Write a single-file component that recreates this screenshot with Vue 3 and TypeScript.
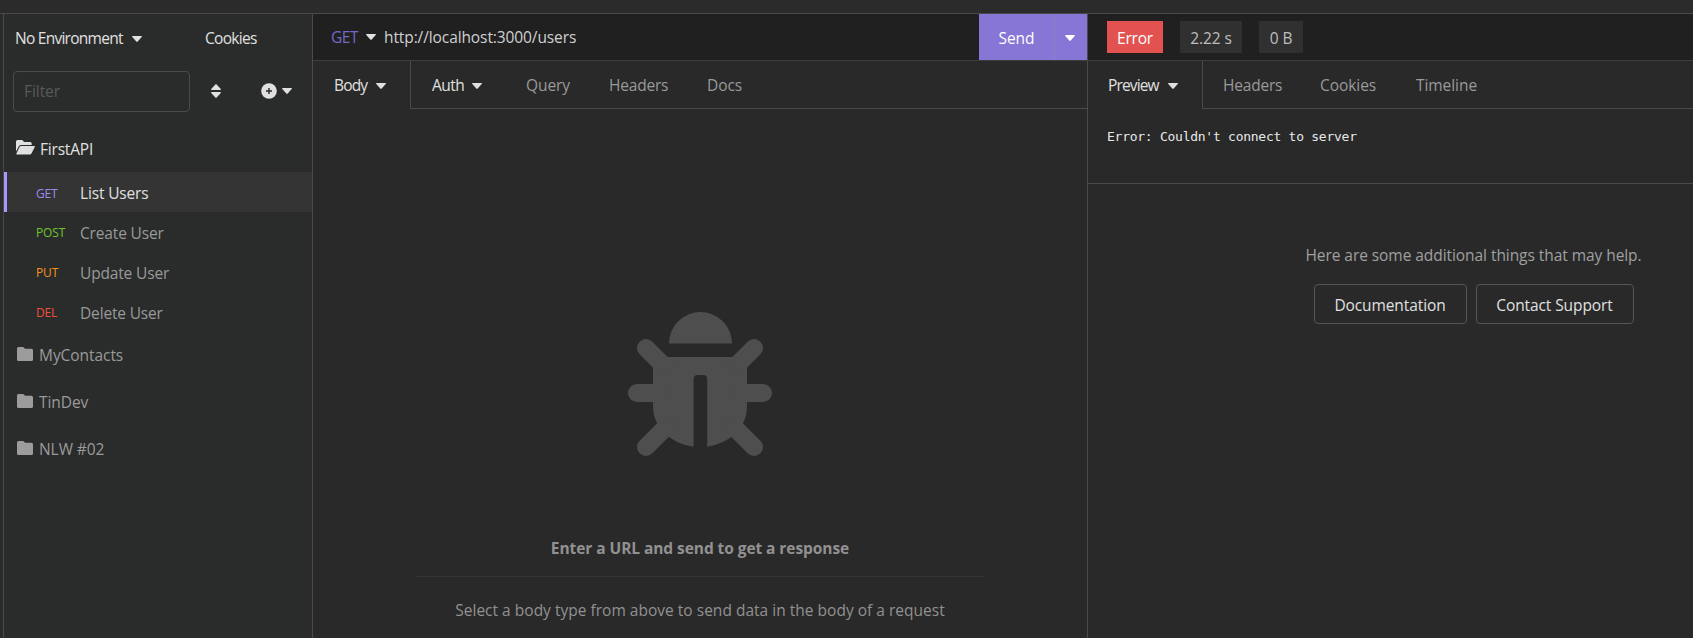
<script setup lang="ts">
interface RequestItem { method: string; name: string; cls: string }

const requests: RequestItem[] = [
  { method: 'GET', name: 'List Users', cls: 'get' },
  { method: 'POST', name: 'Create User', cls: 'post' },
  { method: 'PUT', name: 'Update User', cls: 'put' },
  { method: 'DEL', name: 'Delete User', cls: 'del' },
]
const folders: string[] = ['MyContacts', 'TinDev', 'NLW #02']
</script>

<template>
  <div class="app">
    <div class="topbar"></div>
    <div class="panes">
      <aside class="sidebar">
        <div class="env">
          <span class="t-env">No Environment</span>
          <svg class="caret" viewBox="0 0 10 6"><path d="M.6 0h8.8q.9.3.3 1L5.7 5.5q-.7.8-1.4 0L.3 1Q-.3.3.6 0z" /></svg>
          <span class="t-cookies">Cookies</span>
        </div>
        <div class="filter-row">
          <div class="filter"><span>Filter</span></div>
          <svg class="sort" viewBox="0 0 10 14"><path d="M.7 6Q-.4 5.8.4 4.8L4.4.4Q5 -.2 5.6.4L9.6 4.8Q10.4 5.8 9.3 6zM.7 8h8.6q1.1.2.3 1.2L5.6 13.6q-.6.6-1.2 0L.4 9.2Q-.4 8.2.7 8z" /></svg>
          <svg class="plus" viewBox="0 0 16 16"><circle cx="8" cy="8" r="7.8" /><path d="M8 5v6M5 8h6" /></svg>
          <svg class="caret" viewBox="0 0 10 6"><path d="M.6 0h8.8q.9.3.3 1L5.7 5.5q-.7.8-1.4 0L.3 1Q-.3.3.6 0z" /></svg>
        </div>
        <div class="folder open">
          <svg class="ico-open" viewBox="0 0 19 15"><path d="M0 11.500V1.500Q0 0 1.500 0h4.700l2 2h6Q15.700 2 15.700 3.500V5H5Q3.600 5 2.900 6.200z" /><path d="M5.200 6h13q1 .1.600 1L15.600 13.300Q15 14.500 13.800 14.500H.9q-.9-.1-.5-1L3.400 7.200Q4 6 5.200 6z" /></svg>
          <span class="t-first">FirstAPI</span>
        </div>
        <div v-for="(r, i) in requests" :key="r.name" class="request" :class="{ active: i === 0 }">
          <span class="method" :class="r.cls">{{ r.method }}</span>
          <span class="name">{{ r.name }}</span>
        </div>
        <div class="folders">
          <div v-for="f in folders" :key="f" class="folder">
            <svg class="ico" viewBox="0 0 16 14"><path d="M1.5 0h4.7l2 1.8h6.3Q16 1.8 16 3.3v9.2Q16 14 14.5 14h-13Q0 14 0 12.5v-11Q0 0 1.5 0z" /></svg>
            <span>{{ f }}</span>
          </div>
        </div>
      </aside>

      <section class="request-pane">
        <div class="urlbar">
          <span class="verb">GET</span>
          <svg class="caret" viewBox="0 0 10 6"><path d="M.6 0h8.8q.9.3.3 1L5.7 5.5q-.7.8-1.4 0L.3 1Q-.3.3.6 0z" /></svg>
          <span class="url">http://localhost:3000/users</span>
          <div class="send"><span>Send</span></div>
          <div class="send-more"><svg class="caret" viewBox="0 0 10 6"><path d="M.6 0h8.8q.9.3.3 1L5.7 5.5q-.7.8-1.4 0L.3 1Q-.3.3.6 0z" /></svg></div>
        </div>
        <div class="tabs">
          <div class="tab current body">
            <span class="t-body">Body</span>
            <svg class="caret" viewBox="0 0 10 6"><path d="M.6 0h8.8q.9.3.3 1L5.7 5.5q-.7.8-1.4 0L.3 1Q-.3.3.6 0z" /></svg>
          </div>
          <div class="rest">
            <div class="tab auth">
              <span class="t-auth">Auth</span>
              <svg class="caret" viewBox="0 0 10 6"><path d="M.6 0h8.8q.9.3.3 1L5.7 5.5q-.7.8-1.4 0L.3 1Q-.3.3.6 0z" /></svg>
            </div>
            <span class="tab query">Query</span>
            <span class="tab headers">Headers</span>
            <span class="tab docs">Docs</span>
          </div>
        </div>
        <div class="empty">
          <svg class="bug" viewBox="0 0 144 144">
            <path d="M41 31.5a31.5 31.5 0 0 1 63 0z" />
            <path fill-rule="evenodd" d="M25 45h94v50a47 40 0 0 1-39.8 39.7V67q0-4-4-4h-5.6q-4 0-4 4v67.7A47 40 0 0 1 25 95z" />
            <path class="legs" d="M18 36L36 54M126 36L108 54M9 81h24M135 81h-24M18 135l22-22M126 135l-22-22" />
          </svg>
          <strong>Enter a URL and send to get a response</strong>
          <div class="rule"></div>
          <p>Select a body type from above to send data in the body of a request</p>
        </div>
      </section>

      <section class="response-pane">
        <div class="status">
          <span class="tag error">Error</span>
          <span class="tag time">2.22 s</span>
          <span class="tag size">0 B</span>
        </div>
        <div class="tabs">
          <div class="tab current preview">
            <span class="t-preview">Preview</span>
            <svg class="caret" viewBox="0 0 10 6"><path d="M.6 0h8.8q.9.3.3 1L5.7 5.5q-.7.8-1.4 0L.3 1Q-.3.3.6 0z" /></svg>
          </div>
          <div class="rest">
            <span class="tab r-headers">Headers</span>
            <span class="tab r-cookies">Cookies</span>
            <span class="tab r-timeline">Timeline</span>
          </div>
        </div>
        <pre class="message">Error: Couldn't connect to server</pre>
        <div class="help">
          <p>Here are some additional things that may help.</p>
          <div class="buttons">
            <button class="btn doc">Documentation</button>
            <button class="btn contact">Contact Support</button>
          </div>
        </div>
      </section>
    </div>
  </div>
</template>

<style>
html, body { margin: 0; background: #292929; overflow: hidden; }
</style>

<style scoped>
.app { box-sizing: border-box; width: 1693px; height: 638px; overflow: hidden; display: flex; flex-direction: column; background: #292929; color: #e0e0e0; font: 15.5px/24px "Open Sans", "Noto Sans", sans-serif; letter-spacing: -.06px; white-space: nowrap; }
.app * { box-sizing: border-box; }
.topbar { height: 14px; flex: none; background: #2b2b2b; border-bottom: 1px solid #4a4a4a; }
.panes { flex: 1; display: flex; min-height: 0; }
svg { fill: #e0e0e0; display: block; flex: none; }
.caret { width: 10px; height: 6px; }

.sidebar { width: 313px; flex: none; padding-left: 4px; background: linear-gradient(#494949, #494949) 3px 0 / 1px 100% no-repeat, #2a2c2b; border-right: 1px solid #4a4a4a; }
.env { height: 47px; display: flex; align-items: center; padding-left: 11px; }
.env .caret { margin: 2px 0 0 9px; }
.t-env { width: 108px; letter-spacing: -.74px; }
.t-cookies { margin-left: 63px; letter-spacing: -.7px; }
.filter-row { height: 60px; display: flex; align-items: center; padding-left: 9px; }
.filter { width: 177px; height: 41px; border: 1px solid #4b4b4b; border-radius: 4px; padding: 7px 10px; color: #585a59; }
.sort { width: 10px; height: 14px; margin-left: 21px; }
.plus { width: 16px; height: 16px; margin-left: 40px; }
.plus path { stroke: #292b2a; stroke-width: 1.4; }
.filter-row .plus + .caret { margin-left: 5px; }
.folder { height: 47px; display: flex; align-items: center; color: #9a9a9a; padding-left: 13px; padding-bottom: 1px; }
.folder .ico { width: 16px; height: 14px; fill: #9c9c9c; margin: -2px 6px 0 0; }
.folder.open { height: 51px; color: #e0e0e0; padding: 4px 0 0 12px; }
.ico-open { width: 19px; height: 15px; margin: -2px 5px 0 0; }
.t-first { letter-spacing: -.2px; }
.request { height: 40px; display: flex; align-items: center; padding: 1px 0 0 32px; color: #999; letter-spacing: -.16px; }
.request.active { background: #343434; color: #e0e0e0; box-shadow: inset 3px 0 #a896ff; padding-top: 2px; }
.method { width: 44px; font-size: 12px; padding-top: 1px; }
.get { color: #a08af0; }
.post { color: #6fc72c; }
.put { color: #f5931e; }
.del { color: #ee4f3a; }

.request-pane { width: 775px; flex: none; border-right: 1px solid #4a4a4a; display: flex; flex-direction: column; }
.urlbar { height: 47px; flex: none; display: flex; align-items: center; background: #202020; border-bottom: 1px solid #3e3e42; padding-left: 18px; }
.verb { color: #7469c9; width: 27px; letter-spacing: -.5px; }
.urlbar > .caret { margin-left: 8px; }
.url { margin-left: 8px; color: #d0d0d0; letter-spacing: -.1px; }
.send { margin-left: auto; width: 76px; height: 46px; padding-top: 2px; background: #8776d5; color: #fff; display: grid; place-items: center; border-right: 1px solid #8b80c0; }
.send-more { width: 32px; height: 46px; padding-top: 2px; padding-right: 2px; background: #8776d5; display: grid; place-items: center; }
.send-more .caret { fill: #fff; }
.tabs { height: 48px; flex: none; display: flex; color: #999; }
.tab { display: flex; align-items: center; height: 47px; padding-top: 1px; }
.current, .auth { color: #e0e0e0; padding-top: 0; }
.tab .caret { margin: 2px 0 0 9px; }
.rest { flex: 1; display: flex; border-left: 1px solid #4a4a4a; border-bottom: 1px solid #4a4a4a; }
.body { width: 97px; padding-left: 21px; }
.t-body { width: 33px; letter-spacing: -.85px; }
.t-auth { width: 31px; letter-spacing: -.5px; }
.auth { width: 94px; margin-left: 21px; }
.query { width: 83px; }
.headers { width: 98px; letter-spacing: -.2px; }
.empty { flex: 1; display: flex; flex-direction: column; align-items: center; color: #919191; }
.bug { width: 144px; height: 144px; margin-top: 203px; fill: #4e4e4e; }
.legs { stroke: #4e4e4e; stroke-width: 18; stroke-linecap: round; fill: none; }
.empty strong { margin-top: 80px; letter-spacing: -.07px; }
.rule { width: 570px; height: 1px; background: #353538; margin-top: 16px; }
.empty p { margin: 21px 0 0; letter-spacing: .015px; }

.response-pane { flex: 1; min-width: 0; display: flex; flex-direction: column; }
.status { height: 47px; flex: none; background: #202020; border-bottom: 1px solid #3e3e42; display: flex; align-items: center; padding-left: 19px; }
.tag { height: 32px; padding-top: 2px; display: grid; place-items: center; background: #303030; color: #bebebe; }
.error { width: 56px; background: #e25251; color: #fff; letter-spacing: -.2px; }
.time { width: 62px; margin-left: 17px; }
.size { width: 44px; margin-left: 17px; }
.preview { width: 114px; padding-left: 20px; }
.t-preview { width: 51px; letter-spacing: -.85px; }
.r-headers { margin-left: 20px; width: 97px; letter-spacing: -.2px; }
.r-cookies { width: 96px; }
.message { height: 75px; flex: none; margin: 0; padding: 17px 19px; border-bottom: 1px solid #4a4a4a; font: 13px/22px "DejaVu Sans Mono", monospace; letter-spacing: -.26px; color: #e8e8e8; }
.help { width: 771px; flex: none; padding-top: 59px; display: flex; flex-direction: column; align-items: center; }
.help p { margin: 0; color: #a0a0a0; }
.buttons { display: flex; gap: 9px; margin-top: 17px; }
.btn { height: 40px; padding: 2px 0 0; border: 1px solid #555; border-radius: 4px; background: transparent; color: #e0e0e0; font: inherit; letter-spacing: -.1px; }
.doc { width: 153px; }
.contact { width: 158px; }
</style>
